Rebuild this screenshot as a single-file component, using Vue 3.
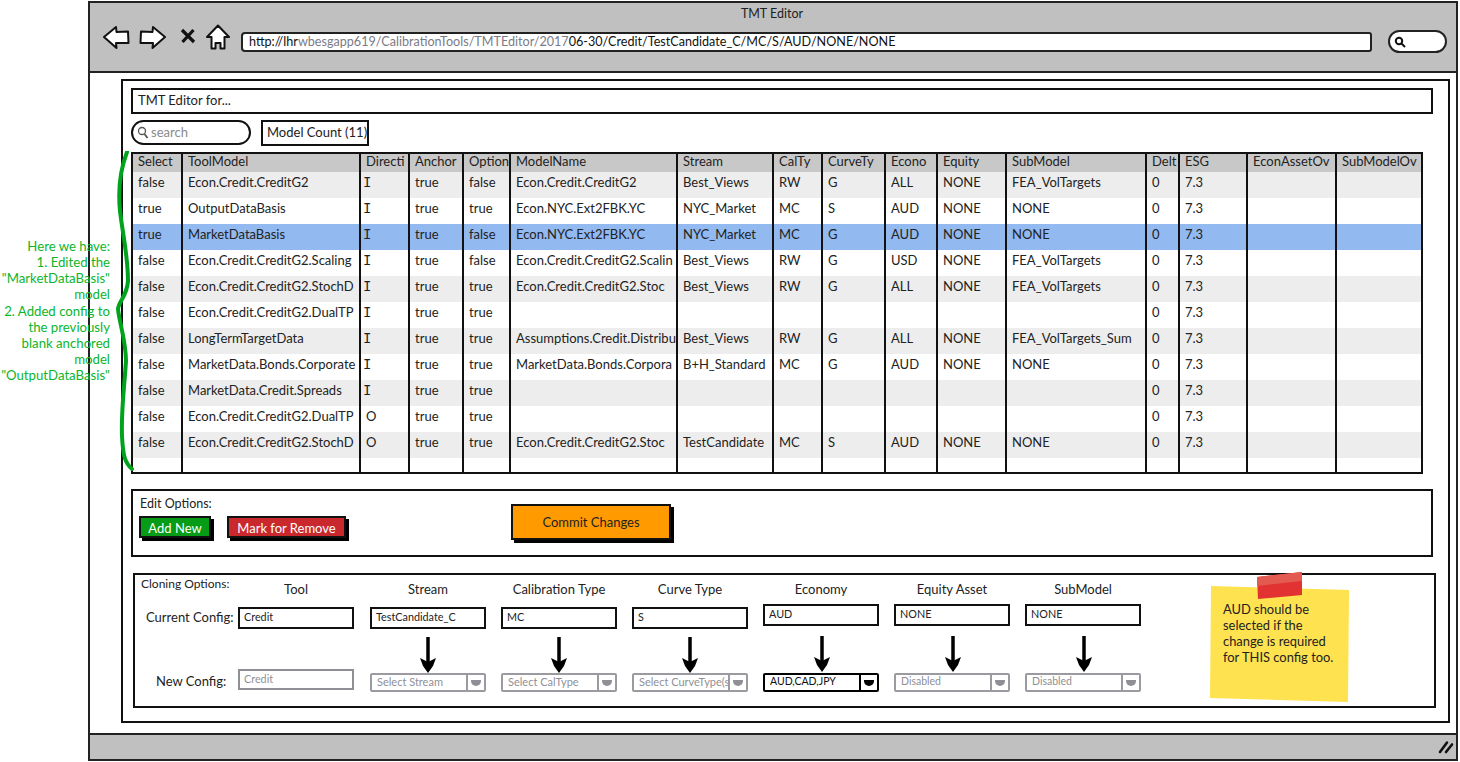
<script setup>
const widths = [50, 178, 49, 54, 47, 167, 96, 49, 63, 52, 69, 140, 33, 68, 89, 84]
const heads = ['Select', 'ToolModel', 'Directi', 'Anchor', 'Option', 'ModelName', 'Stream', 'CalTy', 'CurveTy', 'Econo', 'Equity', 'SubModel', 'Delt', 'ESG', 'EconAssetOv', 'SubModelOv']
const rows = [
  ['false', 'Econ.Credit.CreditG2', 'I', 'true', 'false', 'Econ.Credit.CreditG2', 'Best_Views', 'RW', 'G', 'ALL', 'NONE', 'FEA_VolTargets', '0', '7.3', '', ''],
  ['true', 'OutputDataBasis', 'I', 'true', 'true', 'Econ.NYC.Ext2FBK.YC', 'NYC_Market', 'MC', 'S', 'AUD', 'NONE', 'NONE', '0', '7.3', '', ''],
  ['true', 'MarketDataBasis', 'I', 'true', 'false', 'Econ.NYC.Ext2FBK.YC', 'NYC_Market', 'MC', 'G', 'AUD', 'NONE', 'NONE', '0', '7.3', '', ''],
  ['false', 'Econ.Credit.CreditG2.Scaling', 'I', 'true', 'false', 'Econ.Credit.CreditG2.Scalin', 'Best_Views', 'RW', 'G', 'USD', 'NONE', 'FEA_VolTargets', '0', '7.3', '', ''],
  ['false', 'Econ.Credit.CreditG2.StochD', 'I', 'true', 'true', 'Econ.Credit.CreditG2.Stoc', 'Best_Views', 'RW', 'G', 'ALL', 'NONE', 'FEA_VolTargets', '0', '7.3', '', ''],
  ['false', 'Econ.Credit.CreditG2.DualTP', 'I', 'true', 'true', '', '', '', '', '', '', '', '0', '7.3', '', ''],
  ['false', 'LongTermTargetData', 'I', 'true', 'true', 'Assumptions.Credit.Distribu', 'Best_Views', 'RW', 'G', 'ALL', 'NONE', 'FEA_VolTargets_Sum', '0', '7.3', '', ''],
  ['false', 'MarketData.Bonds.Corporate', 'I', 'true', 'true', 'MarketData.Bonds.Corpora', 'B+H_Standard', 'MC', 'G', 'AUD', 'NONE', 'NONE', '0', '7.3', '', ''],
  ['false', 'MarketData.Credit.Spreads', 'I', 'true', 'true', '', '', '', '', '', '', '', '0', '7.3', '', ''],
  ['false', 'Econ.Credit.CreditG2.DualTP', 'O', 'true', 'true', '', '', '', '', '', '', '', '0', '7.3', '', ''],
  ['false', 'Econ.Credit.CreditG2.StochD', 'O', 'true', 'true', 'Econ.Credit.CreditG2.Stoc', 'TestCandidate', 'MC', 'S', 'AUD', 'NONE', 'NONE', '0', '7.3', '', ''],
]
const cols = [
  { head: 'Tool', value: 'Credit', plain: true, next: 'Credit' },
  { head: 'Stream', value: 'TestCandidate_C', next: 'Select Stream' },
  { head: 'Calibration Type', value: 'MC', next: 'Select CalType' },
  { head: 'Curve Type', value: 'S', next: 'Select CurveType(s)' },
  { head: 'Economy', value: 'AUD', up: true, next: 'AUD,CAD,JPY', active: true },
  { head: 'Equity Asset', value: 'NONE', up: true, next: 'Disabled', tiny: true },
  { head: 'SubModel', value: 'NONE', up: true, next: 'Disabled', tiny: true },
]
const notes = [
  { t: 'Here we have:' }, { t: '1. Edited the' }, { t: '"MarketDataBasis"' }, { t: 'model' },
  { t: '2. Added config to', gap: true }, { t: 'the previously' }, { t: 'blank anchored' }, { t: 'model' }, { t: '"OutputDataBasis"' },
]
</script>

<template>
  <div class="page">
    <div class="browser">
      <header class="titlebar">
        <div class="title">TMT Editor</div>
        <div class="nav">
          <svg class="ico back" width="28" height="24" viewBox="0 0 28 24"><path d="M2 12 L14 2 L14.500 7 L26 6.500 L26.500 18 L14 18 L14.500 23 Z" fill="#fff" stroke="#111" stroke-width="2" stroke-linejoin="round"/></svg>
          <svg class="ico fwd" width="28" height="24" viewBox="0 0 28 24"><path d="M26 12 L14 2 L13.500 7 L2 6.500 L1.500 18 L14 18 L13.500 23 Z" fill="#fff" stroke="#111" stroke-width="2" stroke-linejoin="round"/></svg>
          <svg class="ico stop" width="16" height="16" viewBox="0 0 16 16"><path d="M2 2 L14 14 M13.500 2 L2.500 14" stroke="#111" stroke-width="3.200" fill="none"/></svg>
          <svg class="ico home" width="24" height="26" viewBox="0 0 24 26"><path d="M12 1.500 L23 13 L18.500 13 L18.500 24.500 L14.500 24.500 L14.500 19 L9.500 19 L9.500 24.500 L5.500 24.500 L5.500 13 L1 13 Z" fill="#fff" stroke="#111" stroke-width="2" stroke-linejoin="round"/></svg>
          <div class="url">http://lhr<span>wbesgapp619/CalibrationTools/TMTEditor/2017</span>06-30/Credit/TestCandidate_C/MC/S/AUD/NONE/NONE</div>
          <div class="pill">
            <svg width="12" height="12" viewBox="0 0 12 12"><circle cx="5" cy="5" r="3.200" fill="none" stroke="#111" stroke-width="2"/><path d="M7.500 7.500 L11 11" stroke="#111" stroke-width="2"/></svg>
          </div>
        </div>
      </header>

      <main class="content">
        <section class="panel">
          <div class="heading">TMT Editor for...</div>
          <div class="tools">
            <div class="search">
              <svg width="12" height="13" viewBox="0 0 12 13"><circle cx="5" cy="5" r="3.500" fill="#fff" stroke="#555" stroke-width="1.300"/><path d="M7.500 8 L10.500 12" stroke="#555" stroke-width="1.800"/></svg>
              <span>search</span>
            </div>
            <div class="count">Model Count (11)</div>
          </div>

          <table class="grid">
            <colgroup><col v-for="(w, i) in widths" :key="i" :style="{ width: w + 'px' }" /></colgroup>
            <thead>
              <tr><th v-for="h in heads" :key="h">{{ h }}</th></tr>
            </thead>
            <tbody>
              <tr v-for="(r, i) in rows" :key="i" :class="{ alt: i % 2 === 0 && i !== 2, sel: i === 2 }">
                <td v-for="(c, j) in r" :key="j"><div class="cell" :class="{ dir: c === 'I' }">{{ c }}</div></td>
              </tr>
              <tr class="blank"><td v-for="(w, i) in widths" :key="i"></td></tr>
            </tbody>
          </table>

          <section class="edit">
            <div class="edit-left">
              <div class="edit-label">Edit Options:</div>
              <div class="edit-btns">
                <button class="btn green">Add New</button>
                <button class="btn red">Mark for Remove</button>
              </div>
            </div>
            <button class="btn commit">Commit Changes</button>
          </section>

          <section class="clone">
            <div class="labels">
              <div class="clone-title">Cloning Options:</div>
              <div class="current">Current Config:</div>
              <div class="newcfg">New Config:</div>
            </div>
            <div v-for="c in cols" :key="c.head" class="col" :class="{ first: c.plain }">
              <div class="col-head">{{ c.head }}</div>
              <div class="input" :class="{ up: c.up }">{{ c.value }}</div>
              <div class="arrow" :class="{ up: c.up }">
                <svg v-if="!c.plain" width="18" height="36" viewBox="0 0 18 36"><path d="M9 0 V25" stroke="#000" stroke-width="3.500"/><path d="M1 21 L9 25 L17 21 L14 29 L9 36 L4 29 Z" fill="#000"/></svg>
              </div>
              <div v-if="c.plain" class="input ghost">{{ c.next }}</div>
              <div v-else class="select" :class="{ active: c.active, tiny: c.tiny }">
                <span class="select-text">{{ c.next }}</span>
                <span class="select-btn"><i></i></span>
              </div>
            </div>
            <aside class="sticky">
              <svg class="sticky-bg" width="140" height="133" viewBox="0 0 140 133">
                <path d="M1 15 L139 19 L138 131 L0 127 Z" fill="#ffe24f"/>
                <path d="M47 6 L92 1 L92 24 L48 28 Z" fill="#e23232"/>
                <path d="M47 6 L92 1 L92 10 L47 15 Z" fill="#e25a50"/>
              </svg>
              <div class="sticky-text">AUD should be<br />selected if the<br />change is required<br />for THIS config too.</div>
            </aside>
          </section>
        </section>
      </main>

      <footer class="statusbar">
        <svg width="16" height="14" viewBox="0 0 16 14"><path d="M2 12 L9 2.500 M8 12 L14 4.500" stroke="#111" stroke-width="2.600" stroke-linecap="round"/></svg>
      </footer>
    </div>

    <div class="annotation">
      <div v-for="n in notes" :key="n.t" :class="{ gap: n.gap }">{{ n.t }}</div>
    </div>
    <svg class="brace" width="24" height="322" viewBox="0 0 24 322">
      <path d="M11 1 C3 22 2 40 4 60 C7 85 12 105 12 130 C11 145 3 150 2 158 C3 170 10 190 10 210 C8 240 5 260 6 285 C7 305 9 312 16 318" fill="none" stroke="#00a31c" stroke-width="4" stroke-linecap="round"/>
    </svg>
  </div>
</template>

<style>
html, body { margin: 0; padding: 0; background: #fff; }
</style>

<style scoped>
* { box-sizing: border-box; }
.page {
  position: relative;
  width: 1460px;
  height: 762px;
  overflow: hidden;
  padding: 1px 2px 1px 88px;
  font-family: Lato, "Open Sans", sans-serif;
  font-size: 13px;
  color: #222;
  background: #fff;
}
.browser {
  height: 760px;
  border: 2px solid #222;
  display: flex;
  flex-direction: column;
}
.titlebar {
  height: 70px;
  flex: none;
  background: #c0c0c0;
  border-bottom: 2px solid #222;
}
.title { height: 22px; line-height: 22px; text-align: center; font-size: 12.500px; padding-right: 2px; }
.nav { display: flex; align-items: flex-start; height: 30px; padding-left: 12px; }
.ico { flex: none; }
.fwd { margin-left: 9px; }
.stop { margin: 3px 0 0 13px; }
.home { margin: -1px 0 0 10px; }
.url {
  margin: 7px 0 0 11px;
  width: 1131px;
  height: 20px;
  background: #fff;
  border: 2px solid #222;
  border-radius: 4px 3px 3px 4px;
  line-height: 16px;
  padding-left: 6px;
  color: #111;
  font-size: 12.600px;
  white-space: nowrap;
}
.url span { color: #7b7b85; }
.pill {
  margin: 5px 0 0 16px;
  width: 59px;
  height: 23px;
  background: #fff;
  border: 2px solid #222;
  border-radius: 12px;
  padding: 4px 0 0 4px;
  display: flex;
}
.content { flex: 1; background: #fff; padding: 6px 0 0 31px; }
.panel {
  width: 1329px;
  height: 644px;
  border: 2px solid #111;
  padding: 7px 0 0 8px;
}
.heading {
  width: 1302px;
  height: 26px;
  border: 2px solid #111;
  line-height: 20px;
  padding-left: 5px;
  color: #222;
}
.tools { display: flex; align-items: center; margin-top: 5px; height: 27px; }
.search {
  width: 120px;
  height: 25px;
  border: 2px solid #111;
  border-radius: 13px;
  display: flex;
  align-items: center;
  gap: 2px;
  padding-left: 4px;
  color: #8a8a8a;
}
.search span { margin-bottom: 2px; }
.count {
  margin-left: 10px;
  width: 108px;
  height: 26px;
  border: 2px solid #111;
  line-height: 21px;
  padding-left: 4px;
  white-space: nowrap;
}
.grid {
  margin: 6px 0 0 0;
  width: 1292px;
  table-layout: fixed;
  border-collapse: separate;
  border-spacing: 0;
  border: 2px solid #111;
}
.grid th {
  height: 18px;
  background: #c8c8c8;
  font-weight: 400;
  text-align: left;
  vertical-align: top;
  padding: 0 0 0 5px;
  line-height: 14px;
  border-right: 2px solid #111;
  white-space: nowrap;
}
.grid td {
  height: 26px;
  padding: 0 0 0 5px;
  border-right: 2px solid #111;
  white-space: nowrap;
}
.grid th:last-child, .grid td:last-child { border-right: 0; }
.cell { white-space: nowrap; line-height: 20px; height: 20px; margin-top: -6px; }
.dir { font-family: "Liberation Mono", monospace; font-size: 14px; margin-top: -4px; margin-left: -3px; }
.alt td { background: #ededed; }
.sel td { background: #92b9f0; }
.blank td { height: 14px; }
.edit {
  margin-top: 15px;
  width: 1302px;
  height: 68px;
  border: 2px solid #111;
  display: flex;
  padding-left: 6px;
}
.edit-left { width: 372px; }
.edit-label { height: 25px; padding: 5px 0 0 1px; line-height: 16px; font-size: 12.500px; }
.edit-btns { display: flex; gap: 16px; }
.btn {
  font: inherit;
  border: 2px solid #111;
  box-shadow: 3px 3px 0 #000;
  cursor: default;
  padding: 0;
}
.green { width: 72px; height: 22px; background: #079c15; color: #fff; padding-top: 1px; }
.red { width: 119px; height: 22px; background: #c9282d; color: #fff; padding-top: 1px; }
.commit { width: 160px; height: 36px; margin-top: 13px; background: #ff9a00; color: #222; }
.clone {
  margin: 16px 0 0 2px;
  width: 1303px;
  height: 135px;
  border: 2px solid #111;
  display: flex;
  gap: 15px;
  position: relative;
}
.labels { width: 88px; flex: none; position: relative; }
.labels > div { white-space: nowrap; }
.clone-title { position: absolute; left: 6px; top: 1px; font-size: 12px; line-height: 16px; }
.current { position: absolute; left: 11px; top: 33px; line-height: 18px; }
.newcfg { position: absolute; left: 21px; top: 97px; line-height: 18px; }
.col { width: 116px; flex: none; }
.col.first { margin-right: 1px; }
.col-head { height: 32px; padding-top: 5px; line-height: 18px; text-align: center; }
.input {
  width: 116px;
  height: 22px;
  border: 2px solid #111;
  background: #fff;
  font-size: 10.800px;
  line-height: 16px;
  padding-left: 4px;
}
.input.up { margin-top: -3px; }
.input.ghost { margin-top: -4px; height: 21px; border-color: #8f8f96; color: #8f8f96; }
.arrow { height: 44px; padding: 8px 0 0 49px; line-height: 0; }
.arrow.up { height: 47px; padding-top: 10px; padding-left: 50px; }
.select {
  position: relative;
  width: 116px;
  height: 19px;
  border: 2px solid #9a9aa0;
  background: #fff;
  color: #8f8f96;
  font-size: 11px;
  display: flex;
  align-items: center;
  border-radius: 2px;
}
.select-text { flex: 1; min-width: 0; white-space: nowrap; padding-left: 5px; line-height: 15px; height: 15px; margin-top: -2px; }
.tiny { font-size: 10.500px; }
.select-btn {
  position: relative;
  background: #fff;
  flex: none;
  width: 18px;
  height: 15px;
  border-left: 2px solid #9a9aa0;
  display: flex;
  align-items: center;
  justify-content: center;
}
.select-btn i {
  width: 10px;
  height: 6px;
  background: #8f8f96;
  border-radius: 0 0 5px 5px;
}
.select.active { border-color: #000; color: #111; font-size: 10.500px; }
.active .select-btn { border-left-color: #000; }
.active .select-btn i { background: #000; }
.sticky { position: relative; margin: 12px 0 0 54px; width: 138px; height: 112px; }
.sticky-bg { position: absolute; left: 0; top: -16px; }
.sticky-text {
  position: relative;
  padding: 14px 0 0 13px;
  font-size: 12.900px;
  line-height: 16px;
  color: #222;
  white-space: nowrap;
}
.statusbar {
  flex: none;
  height: 26px;
  background: #c0c0c0;
  border-top: 2px solid #222;
  display: flex;
  justify-content: flex-end;
  align-items: center;
  padding-right: 2px;
}
.annotation {
  position: absolute;
  left: 0;
  top: 238px;
  width: 110px;
  text-align: right;
  color: #0cb52a;
  font-size: 13.200px;
  line-height: 16px;
  white-space: nowrap;
}
.annotation .gap { margin-top: 1px; }
.brace { position: absolute; left: 116px; top: 151px; }
</style>
